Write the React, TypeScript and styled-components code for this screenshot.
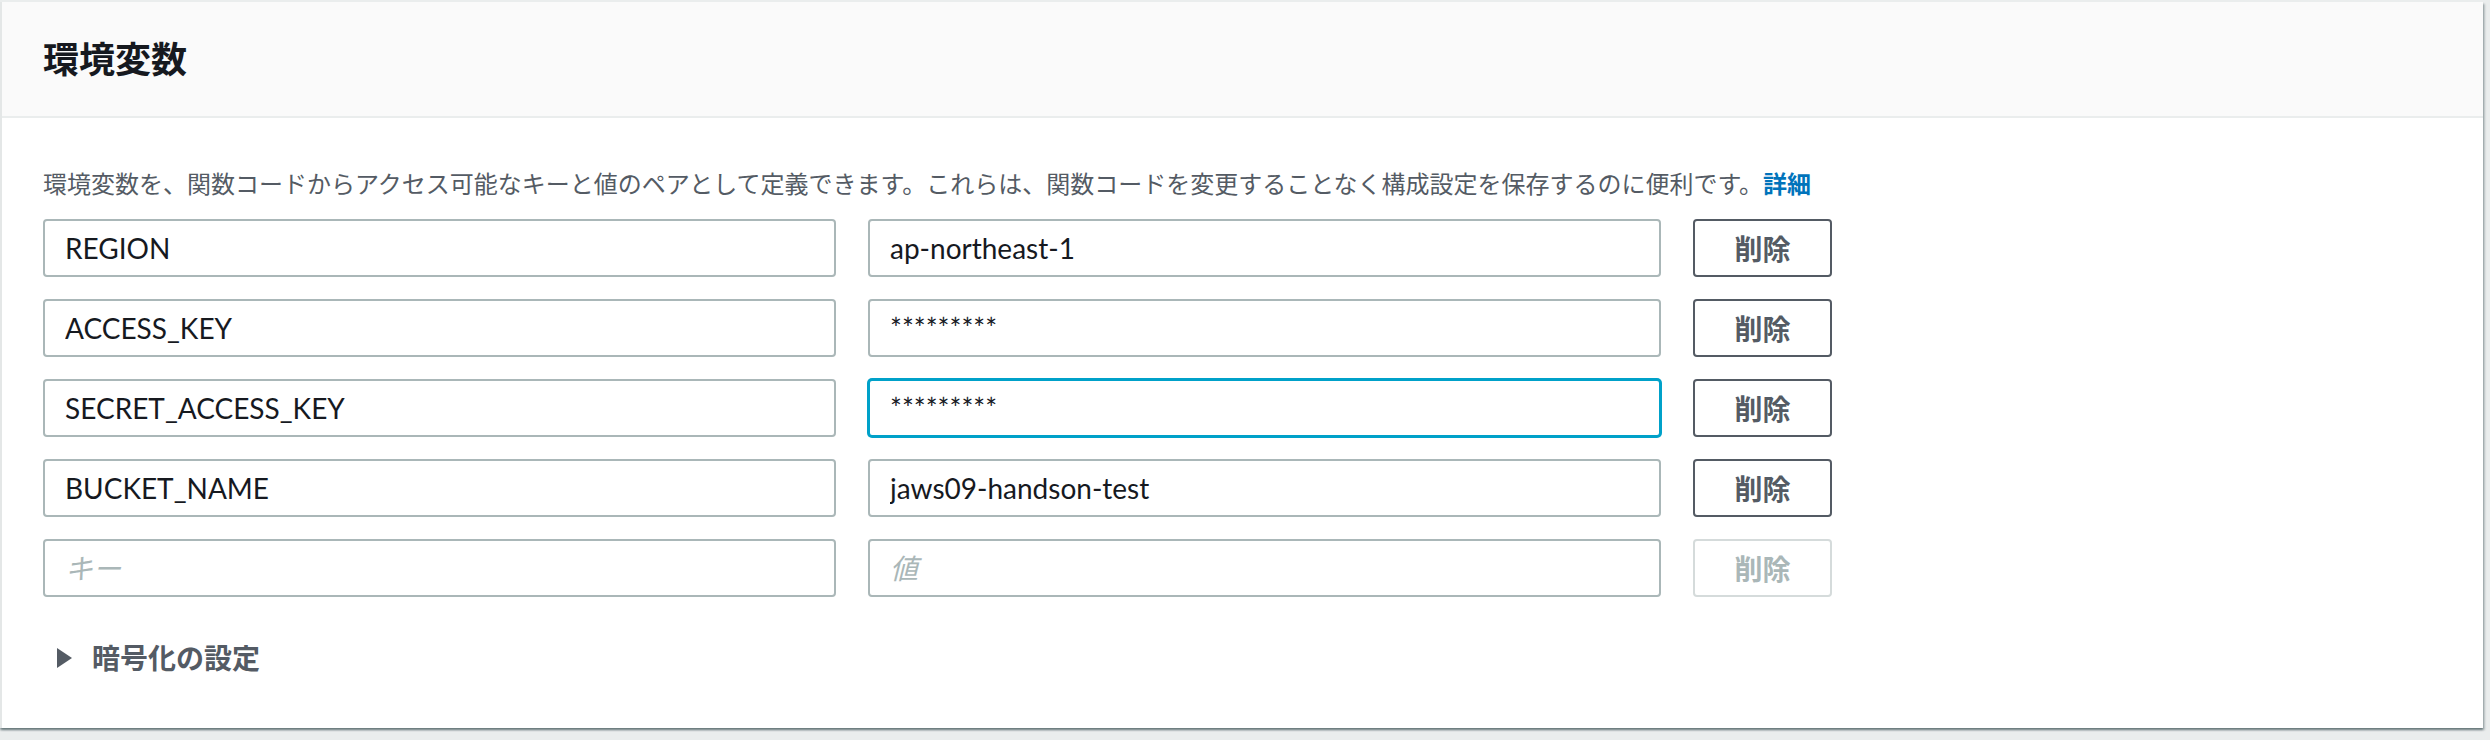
import React from "react";
import styled, { createGlobalStyle } from "styled-components";

const GlobalStyle = createGlobalStyle`
  html, body {
    margin: 0;
    padding: 0;
    background: #eaeded;
  }
  body {
    font-family: Lato, "Noto Sans CJK JP", sans-serif;
  }
`;

const colors = {
  ink: "#16191f",
  gray: "#545b64",
  border: "#aab7b8",
  light: "#d5dbdb",
  focus: "#00a1c9",
  link: "#0073bb",
};

const Panel = styled.section`
  margin: 2px 7px 10px 0;
  background: #fff;
  border-left: 2px solid #e4e7e7;
  box-shadow: 0 2px 2px 0 rgba(0, 28, 36, 0.45),
    2px 2px 2px 0 rgba(0, 28, 36, 0.2);
`;

const Header = styled.header`
  display: flex;
  align-items: center;
  height: 114px;
  padding: 0 41px;
  background: #fafafa;
  border-bottom: 2px solid #eaeded;
`;

const Title = styled.h2`
  margin: 0;
  font-size: 36px;
  line-height: 44px;
  font-weight: 700;
  color: ${colors.ink};
`;

const Body = styled.div`
  padding: 48px 41px 50px;
`;

const Description = styled.p`
  margin: 0 0 17px;
  font-size: 24px;
  line-height: 36px;
  color: ${colors.gray};
  a {
    color: ${colors.link};
    font-weight: 700;
    text-decoration: none;
  }
`;

const VarGrid = styled.div`
  display: grid;
  grid-template-columns: 793px 793px 139px;
  column-gap: 32px;
  row-gap: 22px;
`;

const Field = styled.input<{ $focused?: boolean }>`
  box-sizing: border-box;
  width: 100%;
  height: 58px;
  padding: 0 20px;
  border: 2px solid ${(p) => (p.$focused ? colors.focus : colors.border)};
  border-radius: 4px;
  box-shadow: ${(p) => (p.$focused ? `0 0 0 1px ${colors.focus}` : "none")};
  outline: none;
  background: #fff;
  font-family: Lato, "Noto Sans CJK JP", sans-serif;
  font-size: 28px;
  color: ${colors.ink};
  &::placeholder {
    color: ${colors.border};
    font-style: italic;
  }
`;

const RemoveButton = styled.button`
  box-sizing: border-box;
  height: 58px;
  border: 2px solid ${colors.gray};
  border-radius: 4px;
  background: #fff;
  font-family: Lato, "Noto Sans CJK JP", sans-serif;
  font-size: 28px;
  font-weight: 700;
  color: ${colors.gray};
  padding: 0;
  &:disabled {
    border-color: ${colors.light};
    color: ${colors.border};
  }
`;

const Expander = styled.div`
  display: flex;
  align-items: center;
  gap: 20px;
  margin-top: 41px;
  padding-left: 13px;
  font-size: 28px;
  line-height: 40px;
  font-weight: 700;
  color: ${colors.gray};
`;

const Caret = () => (
  <svg width="16" height="20" viewBox="0 0 16 20">
    <polygon points="1,0 16,10 1,20" fill={colors.gray} />
  </svg>
);

const vars = [
  { key: "REGION", value: "ap-northeast-1" },
  { key: "ACCESS_KEY", value: "*********" },
  { key: "SECRET_ACCESS_KEY", value: "*********", focused: true },
  { key: "BUCKET_NAME", value: "jaws09-handson-test" },
];

export default function App() {
  return (
    <>
      <GlobalStyle />
      <Panel>
        <Header>
          <Title>環境変数</Title>
        </Header>
        <Body>
          <Description>
            環境変数を、関数コードからアクセス可能なキーと値のペアとして定義できます。これらは、関数コードを変更することなく構成設定を保存するのに便利です。
            <a href="#">詳細</a>
          </Description>
          <VarGrid>
            {vars.map((v) => (
              <React.Fragment key={v.key}>
                <Field readOnly value={v.key} />
                <Field readOnly value={v.value} $focused={v.focused} />
                <RemoveButton>削除</RemoveButton>
              </React.Fragment>
            ))}
            <Field readOnly placeholder="キー" />
            <Field readOnly placeholder="値" />
            <RemoveButton disabled>削除</RemoveButton>
          </VarGrid>
          <Expander>
            <Caret />
            暗号化の設定
          </Expander>
        </Body>
      </Panel>
    </>
  );
}
